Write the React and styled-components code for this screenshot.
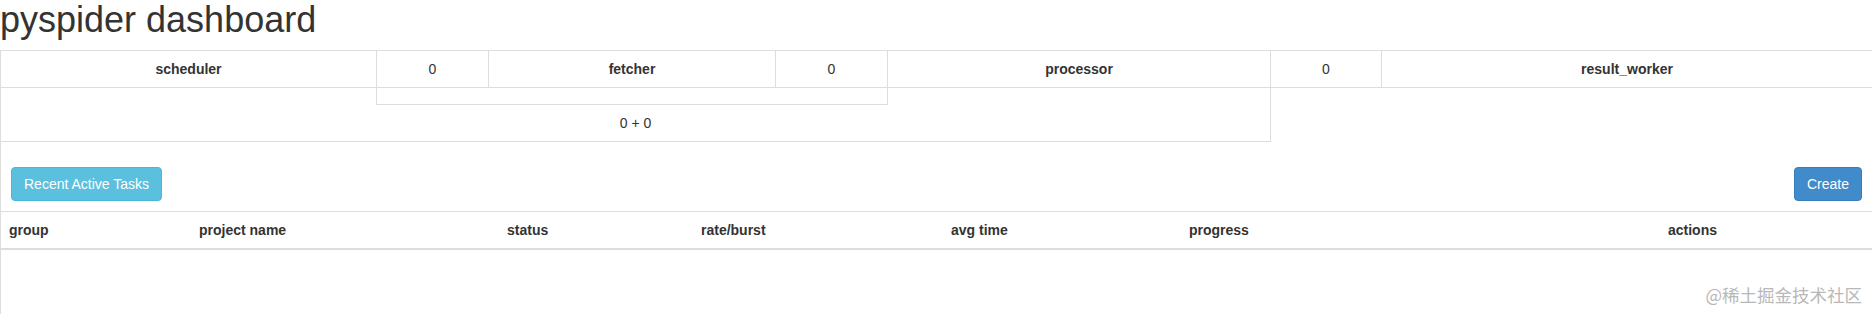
import React from 'react';
import styled, { createGlobalStyle } from 'styled-components';

const GlobalStyle = createGlobalStyle`
  html, body { margin: 0; padding: 0; background: #fff; }
  body {
    font-family: "Liberation Sans", Arial, Helvetica, sans-serif;
    font-size: 14px;
    line-height: 20px;
    color: #333;
  }
  * { box-sizing: border-box; }
`;

const Page = styled.div`
  position: relative;
  width: 1872px;
  min-height: 314px;
`;

const Title = styled.h1`
  margin: 0 0 10px;
  font-size: 36px;
  font-weight: 400;
  line-height: 40px;
  color: #333;
`;

const Main = styled.div`
  border-left: 1px solid #ddd;
  min-height: 264px;
`;

const QueueGrid = styled.div`
  display: grid;
  grid-template-columns: 376px 112px 287px 112px 383px 111px 1fr;
  grid-template-rows: 37px 17px 37px;
  border-top: 1px solid #ddd;
`;

const Cell = styled.div`
  grid-column: ${(p) => p.$col};
  grid-row: ${(p) => p.$row};
  display: flex;
  align-items: center;
  justify-content: center;
  border-right: ${(p) => (p.$right ? '1px solid #ddd' : 'none')};
  border-bottom: ${(p) => (p.$bottom ? '1px solid #ddd' : 'none')};
`;

const QueueName = styled(Cell)`
  font-weight: 700;
`;

const QueueCount = styled(Cell)`
  font-weight: 400;
`;

const Toolbar = styled.div`
  display: flex;
  justify-content: space-between;
  align-items: center;
  padding: 25px 10px 10px;
`;

const Button = styled.button`
  height: 34px;
  padding: 6px 12px;
  font-family: "Liberation Sans", Arial, Helvetica, sans-serif;
  font-size: 14px;
  line-height: 20px;
  color: #fff;
  border-radius: 4px;
  border: 1px solid ${(p) => (p.$variant === 'primary' ? '#357ebd' : '#46b8da')};
  background: ${(p) => (p.$variant === 'primary' ? '#428bca' : '#5bc0de')};
  cursor: pointer;
`;

const ProjectsHead = styled.div`
  display: grid;
  grid-template-columns: 190px 308px 194px 250px 238px 479px 1fr;
  border-top: 1px solid #ddd;
  border-bottom: 2px solid #ddd;
`;

const HeadCell = styled.div`
  padding: 8px;
  font-weight: 700;
  line-height: 20px;
  text-align: left;
`;

const Watermark = styled.div`
  position: absolute;
  right: 10px;
  top: 283px;
  font-family: "Noto Sans CJK SC", "Liberation Sans", sans-serif;
  font-size: 17.5px;
  line-height: 24px;
  color: #b8b8b8;
`;

const queues = [
  { name: 'scheduler', count: 0 },
  { name: 'fetcher', count: 0 },
  { name: 'processor', count: 0 },
];

const columns = ['group', 'project name', 'status', 'rate/burst', 'avg time', 'progress', 'actions'];

export default function App() {
  return (
    <Page>
      <GlobalStyle />
      <Title>pyspider dashboard</Title>
      <Main>
        <QueueGrid>
          {queues.map((q, i) => (
            <React.Fragment key={q.name}>
              <QueueName $col={i * 2 + 1} $row={1} $right $bottom>{q.name}</QueueName>
              <QueueCount $col={i * 2 + 2} $row={1} $right $bottom>{q.count}</QueueCount>
            </React.Fragment>
          ))}
          <QueueName $col={7} $row={1} $bottom>result_worker</QueueName>
          <Cell $col={1} $row={2} $right />
          <Cell $col="2 / 5" $row={2} $right $bottom />
          <Cell $col={5} $row={2} $right />
          <QueueCount $col="1 / 6" $row={3} $right $bottom>0 + 0</QueueCount>
        </QueueGrid>
        <Toolbar>
          <Button $variant="info">Recent Active Tasks</Button>
          <Button $variant="primary">Create</Button>
        </Toolbar>
        <ProjectsHead>
          {columns.map((c) => (
            <HeadCell key={c}>{c}</HeadCell>
          ))}
        </ProjectsHead>
      </Main>
      <Watermark>@稀土掘金技术社区</Watermark>
    </Page>
  );
}
